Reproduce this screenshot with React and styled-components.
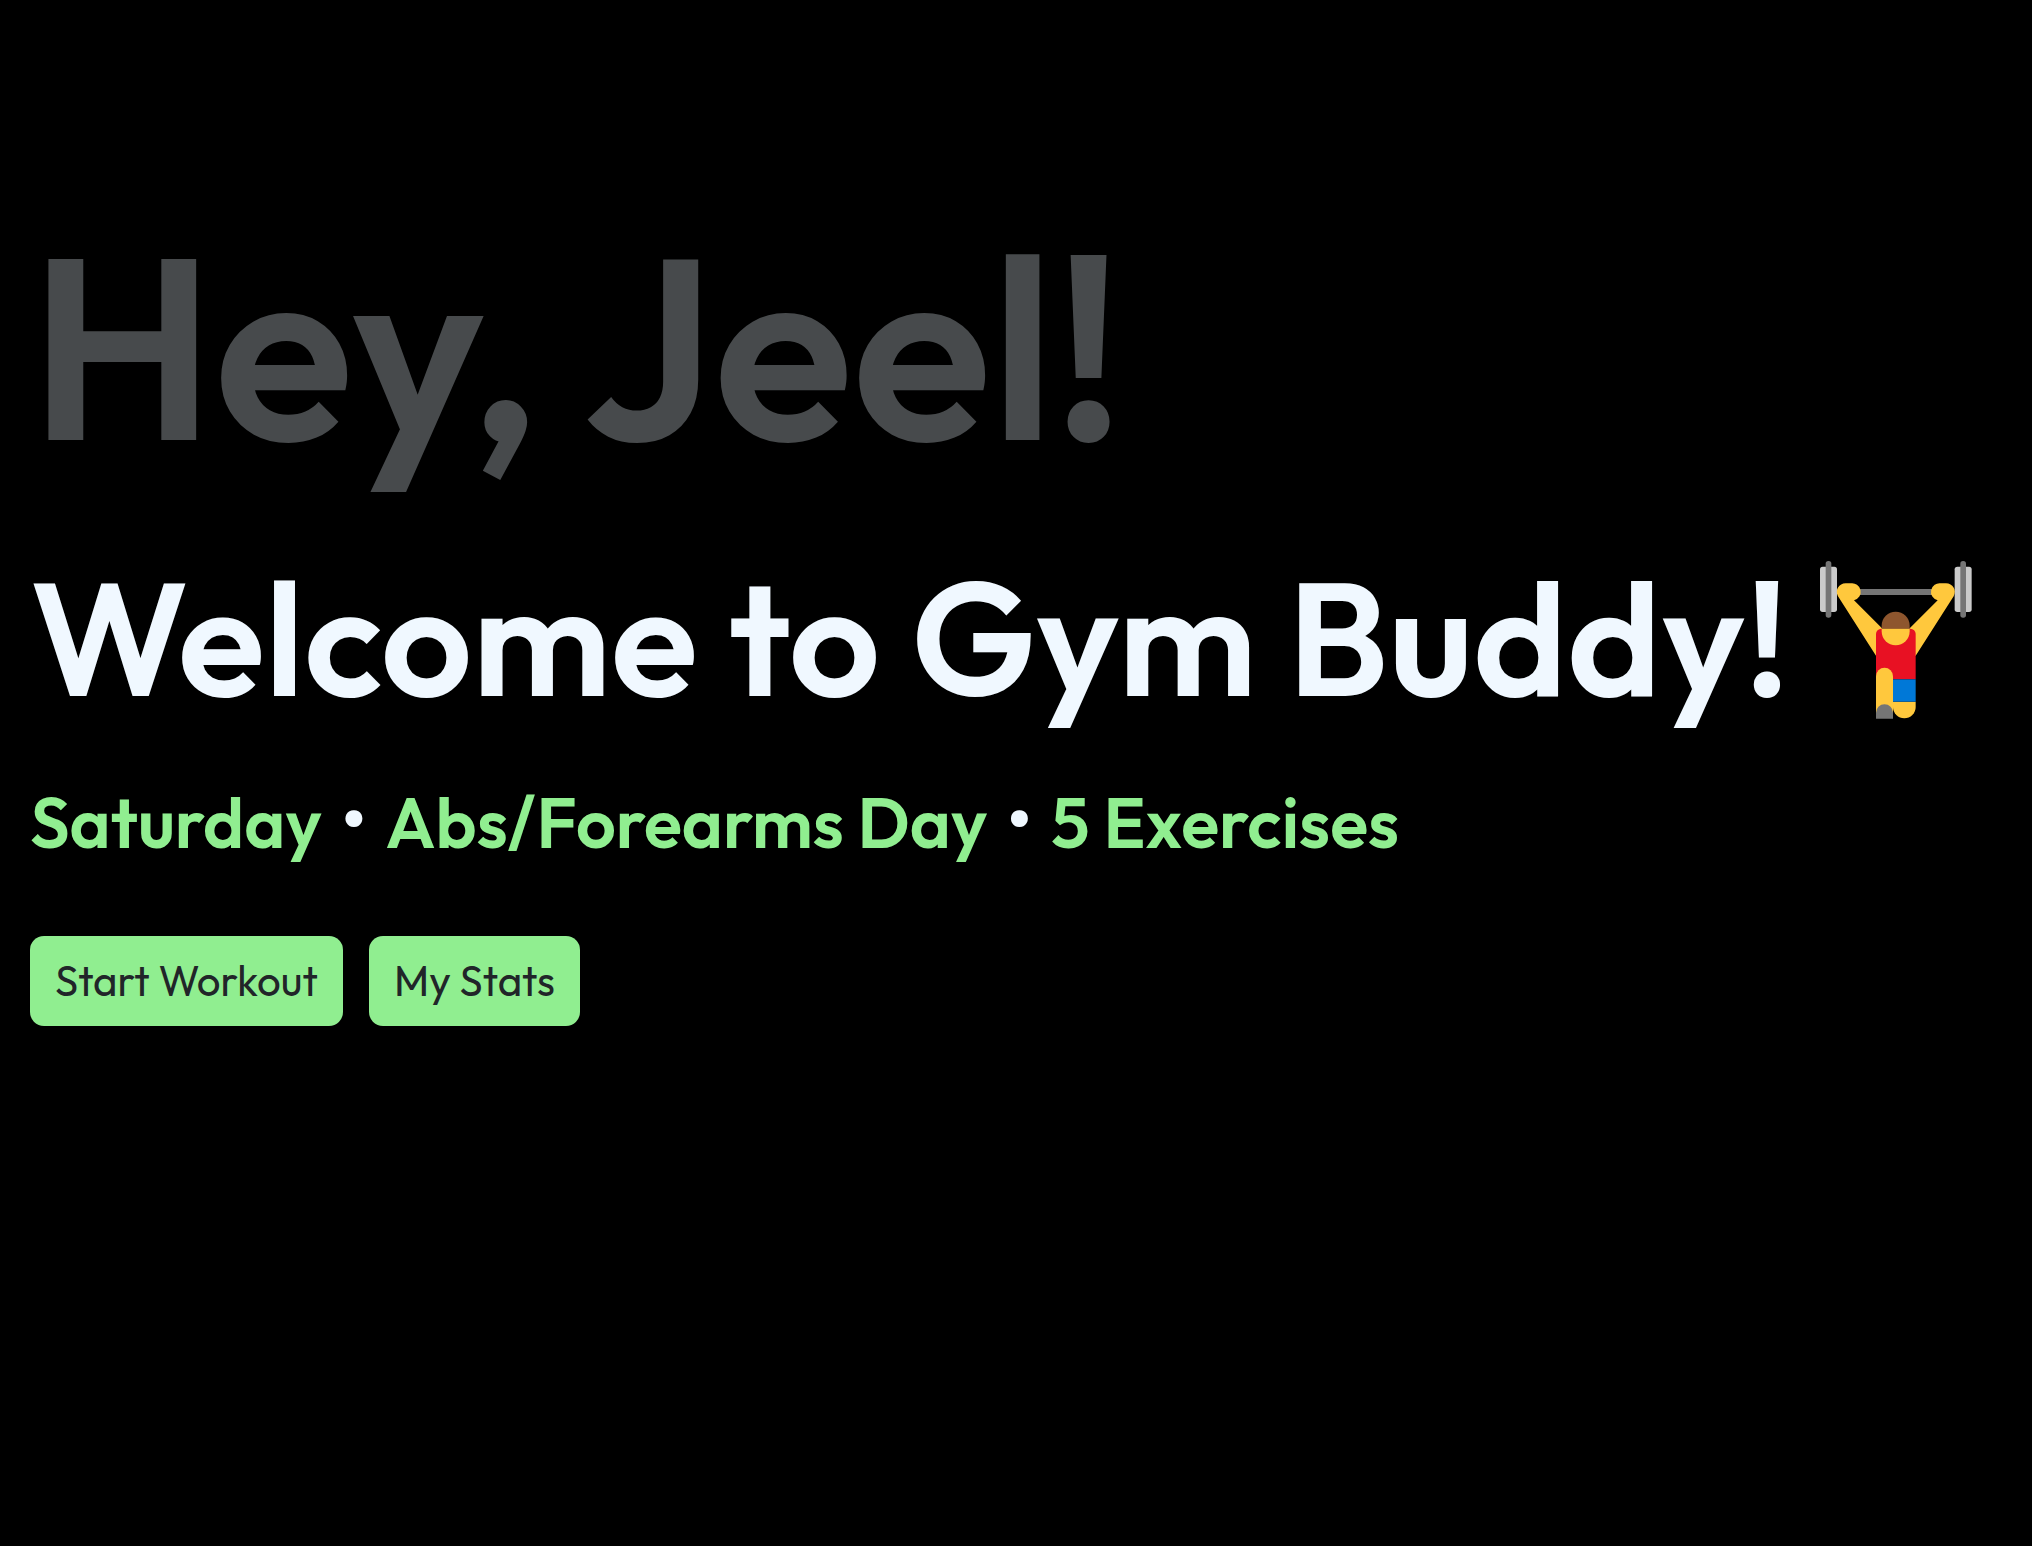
import React from "react";
import styled, { createGlobalStyle } from "styled-components";

const GlobalStyle = createGlobalStyle`
  *, *::before, *::after { box-sizing: border-box; }
  body {
    margin: 0;
    background: #000;
    color: #f0f8ff;
    font-family: Outfit, Lato, sans-serif;
  }
`;

const Hero = styled.main`
  display: flex;
  flex-direction: column;
  min-height: 100vh;
  padding: 192px 30px 40px;
`;

const Greeting = styled.p`
  margin: 0 0 41px;
  color: #474a4c;
  font-size: 256px;
  font-weight: 600;
  line-height: 308px;
`;

const Title = styled.h1`
  display: flex;
  align-items: flex-end;
  gap: 31px;
  margin: 0 0 38px;
  font-size: 160px;
  font-weight: 600;
  line-height: 192px;
  white-space: nowrap;
`;

const Lifter = styled.svg`
  flex: none;
  width: 152px;
  height: 158px;
  margin-bottom: 14px;
`;

const Summary = styled.h2`
  margin: 0 0 66px;
  font-size: 80px;
  font-weight: 500;
  line-height: 96px;
`;

const Highlight = styled.span`
  color: #90ee90;
  font-size: 70px;
  font-weight: 600;
`;

const Dot = styled.span`
  margin: 0 2px;
`;

const Actions = styled.div`
  display: flex;
  flex-wrap: wrap;
  gap: 26px;
`;

const ActionButton = styled.button`
  padding: 20px 25px;
  border: 0;
  border-radius: 14px;
  background: #90ee90;
  color: #212529;
  font: inherit;
  font-size: 42px;
  font-weight: 400;
  line-height: 50px;
  cursor: pointer;
`;

function WeightLifter() {
  return (
    <Lifter viewBox="60 63 456 474" role="img" aria-label="Weight lifter">
      <rect x="160" y="147" width="256" height="18" fill="#757575" />
      <rect x="60" y="80" width="51" height="136" rx="8" fill="#cacaca" />
      <rect x="464" y="80" width="51" height="136" rx="8" fill="#cacaca" />
      <rect x="77" y="63" width="17" height="170" rx="8" fill="#757575" />
      <rect x="481" y="63" width="17" height="170" rx="8" fill="#757575" />
      <path d="M137 130h15a26 26 0 0 1 10 51l84 84v82h-18L114 169c-10-19 3-39 23-39z" fill="#ffc83d" />
      <path d="M438 130h-15a26 26 0 0 0-10 51l-84 84v82h18l114-178c10-19-3-39-23-39z" fill="#ffc83d" />
      <path d="M228 282a16 16 0 0 1 16-16h87a16 16 0 0 1 16 16v136h-119z" fill="#e81123" />
      <path d="M279 485h68v16a34 34 0 0 1-68 0z" fill="#ffc83d" />
      <path d="M279 418h68v67h-68z" fill="#0078d7" />
      <path d="M228 409a25.500 25.500 0 0 1 51 0v110h-51z" fill="#ffc83d" />
      <path d="M228 518a25.500 25.500 0 0 1 51 0v18h-51z" fill="#757575" />
      <path d="M245 265h84v9a42 42 0 0 1-84 0z" fill="#ffc83d" />
      <path d="M245 266v-9a42 42 0 0 1 84 0v9z" fill="#8e562e" />
    </Lifter>
  );
}

export default function App() {
  return (
    <>
      <GlobalStyle />
      <Hero>
        <Greeting>Hey, Jeel!</Greeting>
        <Title>
          Welcome to Gym Buddy!
          <WeightLifter />
        </Title>
        <Summary>
          <Highlight>Saturday</Highlight> <Dot>•</Dot> <Highlight>Abs/Forearms Day</Highlight>{" "}
          <Dot>•</Dot> <Highlight>5 Exercises</Highlight>
        </Summary>
        <Actions>
          <ActionButton type="button">Start Workout</ActionButton>
          <ActionButton type="button">My Stats</ActionButton>
        </Actions>
      </Hero>
    </>
  );
}
